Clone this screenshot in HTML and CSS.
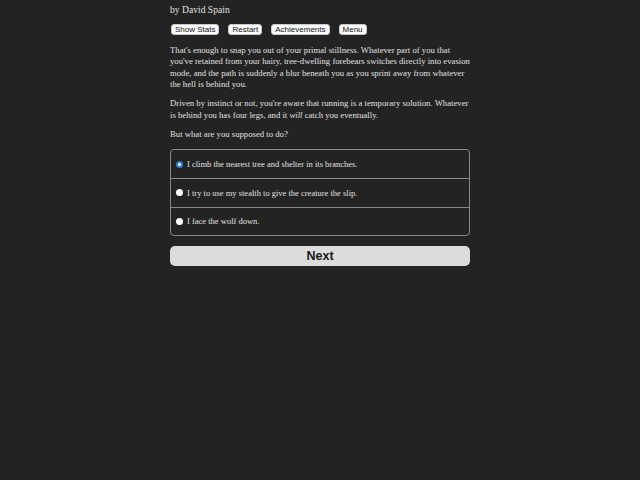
FILE: index.html
```html
<!DOCTYPE html>
<html lang="en">
<head>
<meta charset="utf-8">
<title>Choice of the Wolf</title>
<link rel="stylesheet" href="styles.css">
</head>
<body>
<div class="page">
  <div class="author">by David Spain</div>
  <div class="toolbar">
    <button class="tool-btn">Show Stats</button>
    <button class="tool-btn">Restart</button>
    <button class="tool-btn">Achievements</button>
    <button class="tool-btn">Menu</button>
  </div>
  <div class="story">
    <p>That's enough to snap you out of your primal stillness. Whatever part of you that you've retained from your hairy, tree-dwelling forebears switches directly into evasion mode, and the path is suddenly a blur beneath you as you sprint away from whatever the hell is behind you.</p>
    <p>Driven by instinct or not, you're aware that running is a temporary solution. Whatever is behind you has four legs, and it <em>will</em> catch you eventually.</p>
    <p>But what are you supposed to do?</p>
  </div>
  <form class="choices">
    <label class="choice">
      <input type="radio" name="choice" value="0" checked>
      <span class="dot"></span>
      <span class="choice-text">I climb the nearest tree and shelter in its branches.</span>
    </label>
    <label class="choice">
      <input type="radio" name="choice" value="1">
      <span class="dot"></span>
      <span class="choice-text">I try to use my stealth to give the creature the slip.</span>
    </label>
    <label class="choice">
      <input type="radio" name="choice" value="2">
      <span class="dot"></span>
      <span class="choice-text">I face the wolf down.</span>
    </label>
  </form>
  <button class="next-btn">Next</button>
</div>
</body>
</html>
```

FILE: styles.css
```css
html, body {
  margin: 0;
  padding: 0;
  background: #232323;
}

body {
  color: #e0e0e0;
  font-family: "Liberation Serif", serif;
  font-size: 8.7px;
}

.page {
  width: 300px;
  margin: 0 auto;
}

.author {
  padding-top: 4px;
  line-height: 12px;
  font-size: 9.6px;
}

.toolbar {
  display: flex;
  gap: 9px;
  margin-top: 8px;
  padding-left: 1px;
}

.tool-btn {
  font-family: "Liberation Sans", sans-serif;
  font-size: 8px;
  line-height: 9px;
  color: #111;
  background: #fcfcfc;
  border: 1px solid #c8c8c8;
  border-radius: 3px;
  padding: 0 3px;
  height: 11px;
}

.story {
  margin-top: 10px;
}

.story p {
  margin: 0 0 7.8px 0;
  line-height: 11.4px;
}

.choices {
  margin-top: 9px;
  border: 1px solid #888;
  border-radius: 4px;
  overflow: hidden;
}

.choice {
  display: flex;
  align-items: center;
  height: 27.6px;
  padding-left: 5px;
  gap: 4px;
  border-top: 1px solid #888;
  font-size: 8.5px;
}

.choice:first-child {
  border-top: none;
}

.choice input {
  display: none;
}

.dot {
  width: 7px;
  height: 7px;
  border-radius: 50%;
  background: #fff;
  flex: none;
}

.choice input:checked + .dot {
  background: radial-gradient(circle, #fff 0 1.2px, #2f7de1 1.6px);
}

.next-btn {
  display: block;
  width: 100%;
  height: 20.5px;
  margin-top: 9.5px;
  background: #dcdcdc;
  color: #1a1a1a;
  border: none;
  border-radius: 5px;
  font-family: "Liberation Sans", sans-serif;
  font-weight: bold;
  font-size: 12.5px;
}
```
